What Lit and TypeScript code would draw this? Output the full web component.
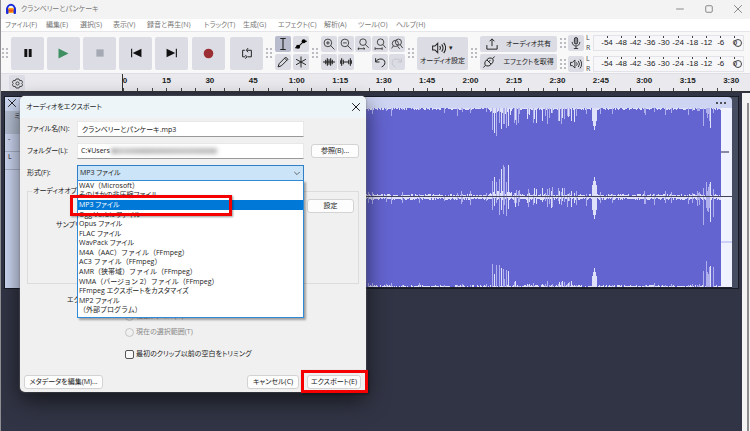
import { LitElement, html, svg, css, nothing } from "lit";
import { customElement } from "lit/decorators.js";
import { classMap } from "lit/directives/class-map.js";
import { styleMap } from "lit/directives/style-map.js";

const base = css`
  * { box-sizing: border-box; }
  :host { font-family: "Open Sans", "Noto Sans CJK JP", sans-serif; font-size: 7px; line-height: 10px; font-feature-settings: "palt"; white-space: nowrap; }
  button, input, select { font: inherit; font-feature-settings: inherit; color: inherit; margin: 0; padding: 0; border: 0; min-width: 0; }
  svg { display: block; flex: none; }
`;

const glyphs: Record<string, unknown> = {
  pause: svg`<path d="M1.500 1h3.200v9H1.500zM6.300 1h3.200v9H6.300z" fill="#111"/>`,
  play: svg`<path d="M.5 .5l10 5-10 5z" fill="#3f8f63"/>`,
  stop: svg`<path d="M1.500 1.500h8v8h-8z" fill="#a4a9b4"/>`,
  start: svg`<path d="M1.500 1.500v8" stroke="#111"/><path d="M10.500 1.500v8l-8-4z" fill="#111"/>`,
  end: svg`<path d="M9.500 1.500v8" stroke="#111"/><path d="M.5 1.500v8l8-4z" fill="#111"/>`,
  record: svg`<circle cx="5.500" cy="5.500" r="4.800" fill="#9c2f33"/>`,
  loop: svg`<path d="M3.500 3H1.500v6h2.500M6 9h3.500V3H5.500M6.500 1L4.800 3l1.700 1.800M4 7.300L5.500 9 4 10.700" fill="none" stroke="#222" stroke-width=".9"/>`,
  ibeam: svg`<path d="M3 .5h5M3 10.500h5M5.500 .5v10" fill="none" stroke="#222"/>`,
  envelope: svg`<path d="M0 9h2l6-6h3" fill="none" stroke="#111"/><circle cx="2.800" cy="8" r="1.900"/><circle cx="8" cy="3" r="1.900"/>`,
  pencil: svg`<path d="M1 10l1-3 6-6 2 2-6 6zM7 2l2 2" fill="none" stroke="#222" stroke-width=".9"/>`,
  star: svg`<path d="M5.500 .5v10M1 3l9 5M10 3l-9 5" fill="none" stroke="#222" stroke-width=".9"/>`,
  zoomin: svg`<circle cx="4.500" cy="4.500" r="3.500" fill="none" stroke="#333" stroke-width=".8"/><path d="M7 7l3.500 3.500M2.800 4.500h3.400M4.500 2.800v3.400" stroke="#333" stroke-width=".8" fill="none"/>`,
  zoomout: svg`<circle cx="4.500" cy="4.500" r="3.500" fill="none" stroke="#333" stroke-width=".8"/><path d="M7 7l3.500 3.500M2.800 4.500h3.400" stroke="#333" stroke-width=".8" fill="none"/>`,
  zoomsel: svg`<circle cx="5.500" cy="3.800" r="3" fill="none" stroke="#333" stroke-width=".8"/><path d="M7.700 6l3 3M.8 9.800h6.400M2 8.700L.8 9.800 2 10.900M6 8.700l1.200 1.100L6 10.900" stroke="#333" stroke-width=".8" fill="none"/>`,
  zoomfit: svg`<circle cx="6" cy="3.800" r="3" fill="none" stroke="#333" stroke-width=".8"/><path d="M8.200 6l2.500 3M1 9.800h6.500M1 8.500v2.400M7.500 8.500v2.400" stroke="#333" stroke-width=".8" fill="none"/>`,
  zoomtog: svg`<circle cx="6.800" cy="3.800" r="2.800" fill="none" stroke="#333" stroke-width=".8"/><circle cx="4" cy="5" r="2.800" fill="none" stroke="#333" stroke-width=".8"/><path d="M8.500 6.200l2.200 3M2.200 7.200L.6 9.500M6 7.500l2 2.500" stroke="#333" stroke-width=".8" fill="none"/>`,
  trim: svg`<path d="M0 5.500h11M2.500 3.500v4M4 2v7M5.500 3v5M7 2v7M8.500 3.500v4" stroke="#222" fill="none"/>`,
  silence: svg`<path d="M1.500 2v7M3 3.500v4M8 3.500v4M9.500 2v7M3 5.500h5M.3 4v3M10.700 4v3" stroke="#222" fill="none"/>`,
  undo: svg`<path d="M1.500 2v3.500H5M1.500 5.500C3.500 1.500 10 2 10 6c0 2-1 3-3 4" fill="none" stroke="#222" stroke-width=".9"/>`,
  redo: svg`<path d="M9.500 2v3.500H6M9.500 5.500C7.500 1.500 1 2 1 6c0 2 1 3 3 4" fill="none" stroke="#c3c5cc" stroke-width=".9"/>`,
  speaker: svg`<path d="M.5 4h1.800L4.500 1.800v7.400L2.300 7H.5zM6 4q1.300 1.500 0 3M7.600 2.700q2.200 2.800 0 5.600M9.200 1.500q3 4 0 8" fill="none" stroke="#222" stroke-width=".8"/>`,
  mic: svg`<rect x="4" y=".5" width="3" height="6" rx="1.500" fill="#8a8d96" stroke="#222" stroke-width=".8"/><path d="M2 4.500c0 5 7 5 7 0M5.500 8.500V11M3.500 10.600h4" fill="none" stroke="#222" stroke-width=".8"/>`,
  share: svg`<path d="M.8 6.500v3.700h9.400V6.500M5.500 7.500V1M3.300 3l2.200-2.200L7.700 3" fill="none" stroke="#222" stroke-width=".9"/>`,
  plug: svg`<path d="M3.500 3.500L7.500 7.500C6 9.500 3.500 9.500 2.300 8.500S1.500 5 3.500 3.500zM3.500 3.500C5 1.500 7.500 1.500 8.700 2.500S9.500 6 7.500 7.500M8.700 2.500L10.700 .4M2.300 8.500L.3 10.600M5 5.500l1.800-1.800" fill="none" stroke="#222" stroke-width=".9"/>`,
  gear: svg`<path d="M4 1h3l.7 1.600 1.900-.1 1.100 2L9.600 5.500l1.100 1-1.100 2-1.900-.1L7 10H4l-.7-1.600-1.900.1-1.100-2 1.100-1-1.100-1 1.100-2 1.900.1z" fill="none" stroke="#333" stroke-width=".9"/><circle cx="5.500" cy="5.500" r="1.600" fill="none" stroke="#333" stroke-width=".9"/>`,
  close: svg`<path d="M2 2l7 7M9 2l-7 7" stroke="currentColor" stroke-width=".9" fill="none"/>`,
  min: svg`<path d="M2 5.500h7" stroke="currentColor" stroke-width=".9" fill="none"/>`,
  max: svg`<rect x="2.500" y="2.500" width="6" height="6" rx="1" stroke="currentColor" stroke-width=".9" fill="none"/>`,
  chevron: svg`<path d="M3 4.500l2.500 2.500L8 4.500" stroke="#555" stroke-width=".8" fill="none"/>`,
};

const icon = (name: string, size = 12) =>
  html`<svg width=${size} height=${size} viewBox="0 0 11 11" aria-hidden="true">${glyphs[name]}</svg>`;

const menus: [string, number][] = [
  ["ファイル(F)", 41], ["編集(E)", 34], ["選択(S)", 33], ["表示(V)", 34], ["録音と再生(N)", 57], ["トラック(T)", 39],
  ["生成(G)", 35], ["エフェクト(C)", 46], ["解析(A)", 34], ["ツール(O)", 38], ["ヘルプ(H)", 40],
];
const times = ["0", "15", "30", "45", "1:00", "1:15", "1:30", "1:45", "2:00", "2:15", "2:30", "2:45", "3:00", "3:15", "3:30"];
const levels = ["-54", "-48", "-42", "-36", "-30", "-24", "-18", "-12", "-6", "0"];
const formats = [
  "WAV（Microsoft）", "そのほかの非圧縮ファイル", "MP3 ファイル", "Ogg Vorbis ファイル", "Opus ファイル", "FLAC ファイル",
  "WavPack ファイル", "M4A（AAC）ファイル（FFmpeg）", "AC3 ファイル（FFmpeg）", "AMR（狭帯域）ファイル（FFmpeg）",
  "WMA（バージョン 2）ファイル（FFmpeg）", "FFmpeg エクスポートをカスタマイズ", "MP2 ファイル", "（外部プログラム）",
];

@customElement("wave-form")
export class WaveForm extends LitElement {
  static styles = css`
    :host { display: block; height: 180px; background: #6464d0; }
    svg { display: block; width: 100%; height: 100%; }
  `;

  private gaps() {
    let seed = 41;
    const rnd = () => (seed = (seed * 16807) % 2147483647) / 2147483647;
    let white = "";
    let pale = "";
    for (let x = 0; x < 702; x++) {
      const peak = (a: number, b: number) => Math.round(a + rnd() * b);
      const spike = rnd();
      let top = peak(0, 2), up = peak(1, 2), down = peak(1, 2), foot = peak(0, 2);
      let soft = false;
      if (spike > 0.93) { top += peak(1, 6); up += peak(0, 4); down += peak(1, 6); foot += peak(0, 3); soft = true; }
      if (x > 470 && x < 493) {
        if (spike > 0.45) { top = peak(14, 14); up = peak(14, 18); down = peak(6, 15); foot = peak(8, 15); soft = spike > 0.6; }
        else { top = peak(1, 6); up = peak(2, 4); }
      } else if (x >= 493 && x < 556) {
        if (spike > 0.45) { top = peak(4, 13); up = peak(3, 7); down = peak(3, 8); foot = peak(1, 5); soft = spike > 0.65; }
      } else if (x > 572 && x < 578) {
        const d = 1 - Math.abs(x - 575) / 5;
        top = Math.round(22 * d); up = Math.round(20 * d); down = Math.round(22 * d); foot = Math.round(19 * d);
        soft = false;
      } else if (x > 683 && x < 698 && spike > 0.4) {
        top = peak(4, 16); up = peak(6, 16); down = peak(8, 20); foot = peak(8, 20); soft = spike > 0.5;
      }
      const d = `M${x} 0h1v${top}h-1zM${x} ${89 - up}h1v${up + down}h-1zM${x} ${179 - foot}h1v${foot}h-1z`;
      if (soft) pale += d; else white += d;
    }
    return svg`<path d=${white} fill="#dfe0fa"/><path d=${pale} fill="#b0b1ec"/>`;
  }

  render() {
    return html`<svg viewBox="0 0 713 180" preserveAspectRatio="none" shape-rendering="crispEdges" aria-hidden="true">
      ${this.gaps()}
      <rect x="702" y="0" width="11" height="180" fill="#f1f2ff"/>
      <path d="M702 44h8" stroke="#202050"/><path d="M702 134h11" stroke="#a9b0ee"/>
      <rect x="0" y="88" width="713" height="1" fill="#44445c"/><rect x="0" y="179" width="713" height="1" fill="#20222e"/>
    </svg>`;
  }
}

@customElement("level-meter")
export class LevelMeter extends LitElement {
  static properties = { glyph: {}, label: {} };
  declare glyph: string;
  declare label: string;
  static styles = [base, css`
    :host { display: flex; height: 18px; gap: 2px; align-items: center; flex: 1; min-height: 0; }
    .key { width: 16px; height: 16px; background: #dcdde4; border-radius: 2px; display: flex; align-items: center; justify-content: center; }
    .sides { display: grid; height: 18px; align-content: space-between; line-height: 8px; width: 5px; color: #444; }
    .scale { flex: 1; height: 16px; border: 1px solid #e2e2e8; background: #f7f7fa; display: flex; justify-content: space-between; padding: 0 4px 0 9px; position: relative; font-family: "Liberation Sans", sans-serif; font-size: 8px; }
    .mark { width: 8px; display: grid; justify-content: center; justify-items: center; grid-template-rows: 2px 10px; color: #222; }
    .mark::before { content: ""; width: 1px; height: 2px; background: #444; }
    .knob { position: absolute; right: 1px; top: 3px; width: 8px; height: 8px; border: 1px solid #444; border-radius: 50%; }
  `];
  render() {
    return html`<button class="key" aria-label=${this.label}>${icon(this.glyph)}</button>
      <div class="sides"><span>L</span><span>R</span></div>
      <div class="scale">${levels.map((l) => html`<span class="mark">${l}</span>`)}<span class="knob"></span></div>`;
  }
}

@customElement("export-dialog")
export class ExportDialog extends LitElement {
  static styles = [base, css`
    :host { display: flex; flex-direction: column; background: #f0f0f0; border-radius: 5px; color: #1b1b1b; box-shadow: 0 0 2px #777, 0 8px 22px #0009; }
    header { height: 22px; padding: 0 4px 0 6px; display: flex; justify-content: space-between; align-items: center; background: #edf5f9; border-radius: 5px 5px 0 0; }
    h2 { margin: 0; font-size: 7px; font-weight: 400; }
    .icon { background: none; display: flex; }
    .body { padding: 3px 7px 0; display: grid; }
    .rows { display: grid; grid-template-columns: 50px 1fr 55px; row-gap: 6px; align-items: center; }
    .field { height: 16px; width: 100%; background: #fff; border: 1px solid #e8e8e8; border-bottom-color: #999; padding: 0 4px; }
    .path { display: flex; align-items: center; gap: 1px; height: 16px; background: #fff; border: 1px solid #e8e8e8; border-bottom-color: #999; padding: 0 0 0 3px; }
    .path input { width: 29px; background: none; }
    .blur { width: 106px; height: 6px; background: linear-gradient(90deg, #999, #bbb 10%, #aaa 30%, #b4b4b4 70%, #aaa); filter: blur(2px); opacity: 0.8; }
    .btn { height: 14px; background: #fdfdfd; border: 1px solid #d3d3d3; border-radius: 3px; display: flex; align-items: center; justify-content: center; }
    .rows .btn { margin-left: 7px; width: 48px; }
    .combo { position: relative; height: 16px; }
    .combo select { appearance: none; width: 100%; height: 16px; background: #cce4f7; border: 1px solid #2f7fc8; padding: 0 2px; display: block; }
    .combo svg { position: absolute; right: 1px; top: 2px; pointer-events: none; }
    .list { position: absolute; z-index: 1; left: 0; right: 0; top: 15px; height: 138px; margin: 0; padding: 0 0 2px; list-style: none; background: #fff; border: 1px solid #2f8ad8; box-shadow: 2px 2px 2px #0005; display: grid; grid-auto-rows: minmax(0, 1fr); }
    .list li { padding-left: 1px; display: flex; align-items: center; min-height: 0; }
    .list .full { font-feature-settings: normal; }
    .list .on { background: #0078d7; color: #fff; }
    fieldset { margin: 5px 0 0; min-width: 0; height: 98px; border: 1px solid #dcdcdc; padding: 3px 4px 0 28px; display: grid; justify-items: end; align-content: start; gap: 7px; }
    legend { margin-left: -24px; padding: 0 1px; height: 10px; }
    fieldset .btn { width: 47px; }
    fieldset span { justify-self: start; }
    .range { display: grid; padding: 11px 0 0 98px; gap: 6px; color: #8a8a8a; }
    .range b { font-weight: 400; color: #1b1b1b; margin-left: -58px; }
    .range label, .trim { display: flex; align-items: center; gap: 2px; }
    .range input, .trim input { appearance: none; width: 9px; height: 9px; border: 1px solid #c4c4c4; border-radius: 50%; }
    .trim { padding: 12px 0 0 98px; }
    .trim input { border: 1px solid #555; border-radius: 2px; background: #f8f8f8; }
    footer { margin-top: auto; padding: 0 5px 3px 4px; display: flex; gap: 8px; }
    footer .btn { width: 52px; }
    footer .meta { width: 79px; margin-right: auto; }
    .last { position: relative; }
    .ring { position: absolute; border: 3px solid #f40000; pointer-events: none; box-shadow: 1px 1px 2px #0006; }
    .ring.save { inset: -5px -7px -4px -6px; }
    .ring.pick { z-index: 2; left: -7px; top: 30px; width: 162px; height: 21px; }
    .last .btn { width: 54px; }
  `];
  render() {
    return html`
      <header><h2>オーディオをエクスポート</h2><button class="icon" aria-label="閉じる">${icon("close")}</button></header>
      <div class="body">
        <div class="rows">
          <label for="name">ファイル名(N):</label><input id="name" class="field" value="クランベリーとパンケーキ.mp3" /><span></span>
          <label for="folder">フォルダー(L):</label><div class="path"><input id="folder" value="C:¥Users¥" /><span class="blur"></span></div>
          <button class="btn">参照(B)...</button>
          <label for="format">形式(F):</label>
          <div class="combo">
            <select id="format"><option>MP3 ファイル</option></select>${icon("chevron")}
            <ul class="list" role="listbox">${formats.map((f, i) => html`<li role="option" aria-selected=${i === 2} class=${classMap({ on: i === 2, full: f.includes("（") })}>${f}</li>`)}</ul>
            <span class="ring pick"></span>
          </div>
        </div>
        <fieldset><legend>オーディオオプション</legend><button class="btn">設定</button><span>サンプリングレート</span></fieldset>
        <div class="range">
          <b>エクスポート範囲</b>
          <label><input type="radio" name="range" disabled />複数ファイル(U)</label>
          <label><input type="radio" name="range" disabled />現在の選択範囲(T)</label>
        </div>
        <label class="trim"><input type="checkbox" />最初のクリップ以前の空白をトリミング</label>
      </div>
      <footer>
        <button class="btn meta">メタデータを編集(M)...</button>
        <button class="btn">キャンセル(C)</button>
        <div class="last"><button class="btn">エクスポート(E)</button><span class="ring save"></span></div>
      </footer>`;
  }
}

@customElement("app-root")
export class AppRoot extends LitElement {
  static styles = [base, css`
    :host { display: flex; flex-direction: column; min-height: 100vh; background: #313444; color: #777; border-left: 1px solid #8d8d92; overflow: hidden; }
    button { cursor: default; }
    .title { height: 19px; background: #f3f3f3; display: flex; align-items: center; padding: 0 6px 2px 4px; gap: 4px; }
    .title span { flex: 1; }
    .win { background: none; margin-left: 13px; display: flex; color: #888; }
    .menu { height: 12px; background: #fff; padding-left: 4px; display: grid; align-items: center; }
    .menu button { background: none; text-align: left; white-space: nowrap; }
    .tools { height: 42px; background: #f8f8f9; border-top: 1px solid #e6e6ea; display: flex; padding: 3px 6px 2px 1px; gap: 3px; align-items: center; color: #222; }
    .grip { width: 6px; height: 10px; background: radial-gradient(circle at 1px 1px, #bbbbc2 1px, transparent 1px) 0 0 / 4px 4px; flex: none; }
    .key { background: #dcdde4; border-radius: 2px; display: flex; align-items: center; justify-content: center; flex: none; }
    .big { width: 33px; height: 33px; }
    .record { margin-left: 1px; }
    .loop { margin-left: 2px; }
    .small { width: 16px; height: 16px; }
    .on { background: #b9bccd; }
    .pairs { display: grid; grid-auto-flow: column; grid-template-rows: 16px 16px; gap: 2px; }
    .zooms { column-gap: 1px; }
    .gapcell { width: 16px; }
    .setup { width: 51px; height: 33px; display: grid; justify-items: center; align-content: center; gap: 1px; }
    .setup span { display: flex; gap: 3px; align-items: center; }
    .wide { width: 77px; height: 16px; gap: 8px; }
    .side { display: grid; grid-template-rows: 16px 16px; gap: 2px; }
    .meters { flex: 1; display: grid; gap: 3px; min-width: 0; }
    .meter { display: flex; gap: 2px; align-items: center; min-width: 0; }
    .ruler { height: 19px; background: #e9e9ee; border-top: 1px solid #dedee4; display: flex; color: #222; font-size: 8px; font-weight: 700; font-family: "Liberation Sans", sans-serif; border-bottom: 1px solid #333; }
    .corner { width: 121px; padding: 1px 0 0 8px; flex: none; }
    .corner button { width: 16px; height: 16px; }
    .scale { flex: 1; display: flex; min-width: 0; border-left: 1px solid #333; }
    .cell { flex: 1 1 0; display: grid; grid-template-rows: 14px 3px; min-width: 0; }
    .cell span { width: 0; display: flex; justify-content: center; align-items: center; }
    .cell:first-child span { width: 4px; }
    .ticks { display: flex; }
    .ticks i { flex: 1; border-left: 1px solid #444; }
    .work { flex: 1; display: flex; position: relative; padding-top: 1px; }
    .canvas { flex: 1; padding: 3px 3px 0; min-width: 0; }
    .track { display: flex; border: 1px solid #181a24; background: #464d60; padding: 0 6px 0 0; height: 193px; }
    .panel { width: 15px; flex: none; background: #cdd7f2; color: #222; display: grid; grid-template-rows: 14px 10px 13px 18px 18px; }
    .panel span { padding-left: 3px; }
    .panel .shut { padding-left: 1px; }
    .panel .shut button { display: flex; background: none; }
    .panel .band { background: #b4bfd2; text-align: right; }
    .panel .gain, .panel .pan { border-bottom: 1px solid #aab2c8; }
    .clip { flex: 1; min-width: 0; }
    .bar { height: 11px; background: #ced5f3; border-radius: 0 4px 0 0; display: flex; justify-content: flex-end; align-items: center; gap: 2px; padding-right: 6px; }
    .bar i { width: 2px; height: 2px; border-radius: 50%; background: #222; }
    .scroll { width: 8px; flex: none; background: #f3f3f3; padding: 10px 1px 0; display: flex; justify-content: flex-end; }
    .scroll i { width: 2px; background: #8c8c8c; }
    export-dialog { position: absolute; left: 19px; top: 4px; width: 346px; height: 296px; }
  `];

  private key(name: string, cls: string, size = 12) {
    return html`<button class="key ${cls}" aria-label=${name}>${icon(name, size)}</button>`;
  }

  render() {
    const cols = { gridTemplateColumns: menus.map((m) => m[1] + "px").join(" ") };
    return html`
      <div class="title">
        <svg width="12" height="12" viewBox="0 0 12 12" aria-hidden="true"><path d="M2 7C2 0 10 0 10 7" fill="none" stroke="#1c2bd8" stroke-width="2"/><rect x="3" y="5" width="6" height="5" rx="1" fill="#ffa51c"/><path d="M4 8.500l1-2 1 2.500 1-2.500 1 2" fill="none" stroke="#f03818" stroke-width=".8"/><rect x="1" y="6" width="2.500" height="5" rx="1" fill="#1c2bd8"/><rect x="8.500" y="6" width="2.500" height="5" rx="1" fill="#1c2bd8"/></svg>
        <span>クランベリーとパンケーキ</span>
        ${["min", "max", "close"].map((n) => html`<button class="win" aria-label=${n}>${icon(n, 12)}</button>`)}
      </div>
      <nav class="menu" style=${styleMap(cols)}>${menus.map((m) => html`<button>${m[0]}</button>`)}</nav>
      <div class="tools">
        <span class="grip"></span>
        ${this.key("pause", "big", 10)}${this.key("play", "big", 11)}${this.key("stop", "big", 10)}${this.key("start", "big")}${this.key("end", "big")}
        ${this.key("record", "big record", 11)}${this.key("loop", "big loop")}
        <span class="grip"></span>
        <div class="pairs">${this.key("ibeam", "small on")}${this.key("pencil", "small")}${this.key("envelope", "small")}${this.key("star", "small")}</div>
        <span class="grip"></span>
        <div class="pairs zooms">
          ${this.key("zoomin", "small")}${this.key("trim", "small")}${this.key("zoomout", "small")}${this.key("silence", "small")}
          ${this.key("zoomsel", "small")}<span class="gapcell"></span>${this.key("zoomfit", "small")}${this.key("undo", "small")}
          ${this.key("zoomtog", "small")}${this.key("redo", "small")}
        </div>
        <span class="grip"></span>
        <button class="key setup"><span>${icon("speaker", 14)}▾</span>オーディオ設定</button>
        <span class="grip"></span>
        <div class="side">
          <button class="key wide">${icon("share")}オーディオ共有</button>
          <button class="key wide">${icon("plug")}エフェクトを取得</button>
        </div>
        <div class="meters">
          <div class="meter"><span class="grip"></span><level-meter glyph="mic" label="録音メーター"></level-meter></div>
          <div class="meter"><span class="grip"></span><level-meter glyph="speaker" label="再生メーター"></level-meter></div>
        </div>
      </div>
      <div class="ruler">
        <div class="corner">${this.key("gear", "gear", 11)}</div>
        <div class="scale">${times.map((t, i) => {
          const last = i === times.length - 1;
          return html`<div class="cell" style=${styleMap({ flexGrow: last ? "13" : "30" })}>
            <span>${t}</span><div class="ticks"><i></i>${last ? nothing : html`<i></i><i></i>`}</div></div>`;
        })}</div>
      </div>
      <div class="work">
        <div class="canvas">
          <div class="track">
            <div class="panel"><span class="shut"><button aria-label="トラックを閉じる">${icon("close", 12)}</button></span><span class="band">ミ</span><span class="band"></span><span class="gain">-</span><span class="pan">L</span></div>
            <div class="clip"><div class="bar"><i></i><i></i><i></i></div><wave-form></wave-form></div>
          </div>
        </div>
        <div class="scroll"><i></i></div>
        <export-dialog></export-dialog>
      </div>`;
  }
}
